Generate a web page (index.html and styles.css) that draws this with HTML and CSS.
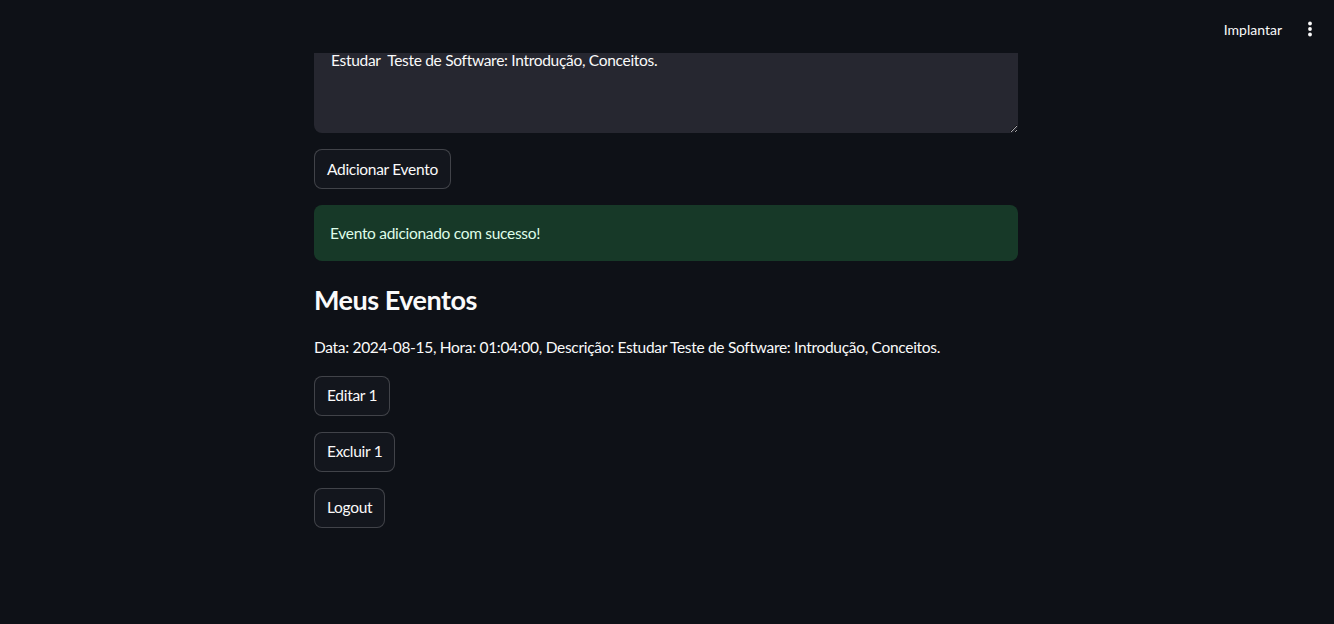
FILE: index.html
```html
<!DOCTYPE html>
<html lang="pt">
<head>
<meta charset="utf-8">
<link rel="stylesheet" href="styles.css">
<title>Agenda</title>
</head>
<body>
<header class="topbar">
  <span class="deploy">Implantar</span>
  <span class="menu">
    <svg width="16" height="16" viewBox="0 0 16 16" aria-hidden="true">
      <circle cx="8" cy="2.5" r="1.9" fill="#fafafa"/>
      <circle cx="8" cy="8" r="1.9" fill="#fafafa"/>
      <circle cx="8" cy="13.5" r="1.9" fill="#fafafa"/>
    </svg>
  </span>
</header>
<main class="main">
  <div class="block">
    <textarea class="textarea" readonly>Estudar  Teste de Software: Introdução, Conceitos.</textarea>
    <div><button class="btn">Adicionar Evento</button></div>
    <div class="alert">Evento adicionado com sucesso!</div>
    <h2 class="heading">Meus Eventos</h2>
    <p class="text">Data: 2024-08-15, Hora: 01:04:00, Descrição: Estudar Teste de Software: Introdução, Conceitos.</p>
    <div><button class="btn">Editar 1</button></div>
    <div><button class="btn">Excluir 1</button></div>
    <div><button class="btn">Logout</button></div>
  </div>
</main>
</body>
</html>
```

FILE: styles.css
```css
html, body {
  margin: 0;
  padding: 0;
  background: #0e1117;
  color: #fafafa;
  font-family: Lato, "Noto Sans", sans-serif;
}
.topbar {
  position: fixed;
  top: 0;
  left: 0;
  right: 0;
  height: 53px;
  background: #0e1117;
  display: flex;
  align-items: flex-start;
  justify-content: flex-end;
  padding-right: 16px;
  gap: 20px;
  z-index: 10;
  box-sizing: border-box;
}
.deploy {
  font-size: 14px;
  line-height: 17px;
  padding-top: 21px;
  color: #fafafa;
}
.menu {
  display: flex;
  width: 16px;
  height: 16px;
  padding-top: 21px;
}
.main {
  padding-top: 41px;
  padding-right: 2px;
  display: flex;
  justify-content: center;
}
.block {
  width: 704px;
  display: flex;
  flex-direction: column;
  gap: 16px;
  font-size: 15.5px;
  letter-spacing: -0.3px;
}
.textarea {
  display: block;
  box-sizing: border-box;
  width: 704px;
  height: 92px;
  margin: 0;
  padding: 7px 17px;
  background: #262730;
  border: none;
  border-radius: 8px;
  color: #fafafa;
  font-family: inherit;
  font-size: 15.5px;
  letter-spacing: -0.3px;
  line-height: 1.6;
  outline: none;
  white-space: pre-wrap;
}
.btn {
  box-sizing: border-box;
  height: 40px;
  padding: 0 12px;
  background: #13161d;
  border: 1px solid rgba(250, 250, 250, 0.2);
  border-radius: 8px;
  color: #fafafa;
  font-family: inherit;
  font-size: 15.5px;
  letter-spacing: -0.3px;
  line-height: 1.6;
}
.alert {
  box-sizing: border-box;
  height: 56px;
  padding: 0 16px;
  display: flex;
  align-items: center;
  background: #173928;
  border-radius: 8px;
  color: #dffde9;
}
.heading {
  margin: 0;
  padding-top: 6px;
  font-size: 27px;
  font-weight: 700;
  letter-spacing: -0.5px;
  line-height: 1.25;
}
.text {
  margin: 2px 0 0;
  line-height: 1.6;
}
```
